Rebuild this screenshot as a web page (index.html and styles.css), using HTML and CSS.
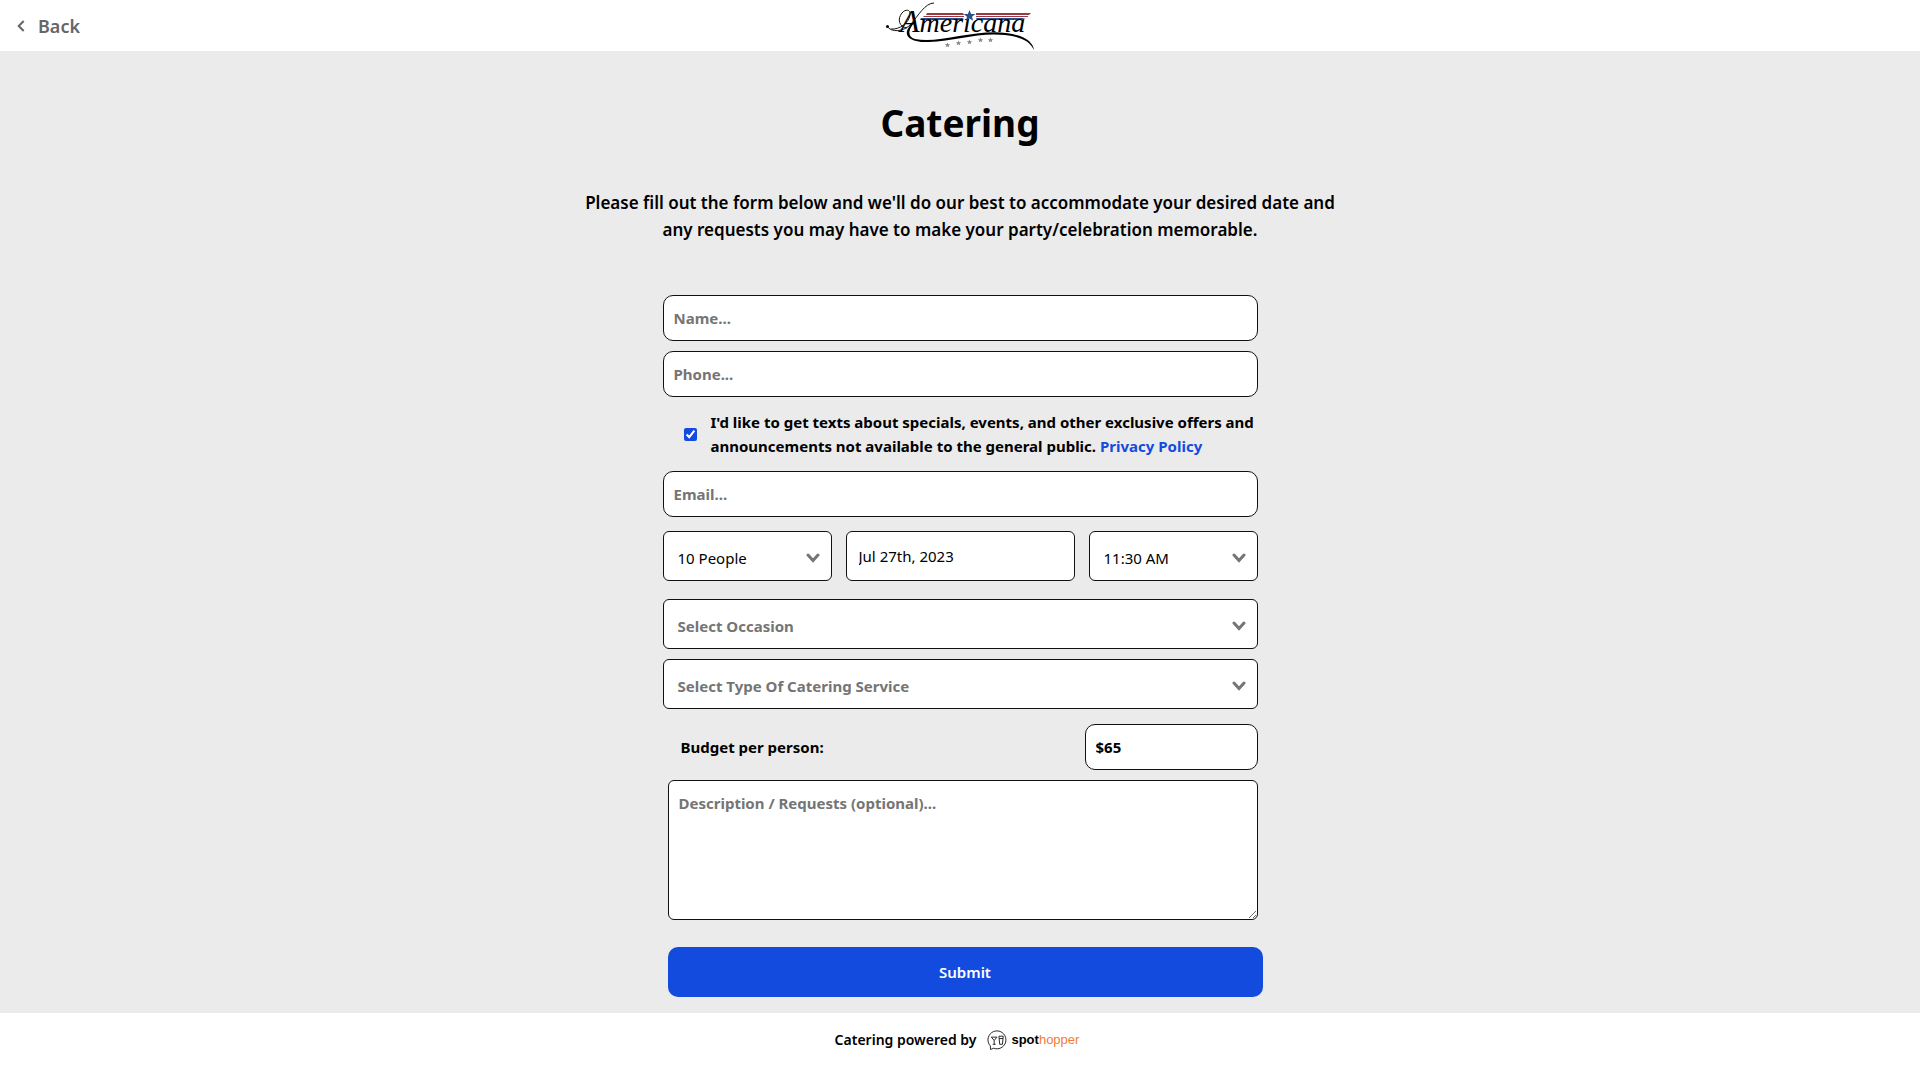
FILE: index.html
```html
<!DOCTYPE html>
<html lang="en">
<head>
<meta charset="utf-8">
<meta name="viewport" content="width=device-width, initial-scale=1">
<title>Americana – Catering</title>
<link rel="stylesheet" href="styles.css">
</head>
<body>
<header class="topbar">
  <a class="back" href="#">
    <svg class="back-icon" viewBox="0 0 8 12" aria-hidden="true"><path d="M6.7 1 1.7 6l5 5"/></svg>
    <span>Back</span>
  </a>
  <a class="brand" href="#" aria-label="Americana home">
    <svg class="brand-logo" viewBox="0 0 150 48">
      <g class="flag-red"><path d="M42 11h36l1 2H41zM91 11h55l-2 2H91z"/><path d="M39 14h40v1H38zM91 14h52v1H91z"/></g>
      <g class="flag-blue"><path d="M36 16h43l-3 2H35zM91 16h50l-7 2H92z"/></g>
      <text class="script" x="15" y="30"><tspan class="script-cap">A</tspan>mericana</text>
      <path class="flag-blue" d="m84.500 8 1.600 4 4.200.1-3.300 2.600 1.200 4-3.700-2.300-3.700 2.300 1.200-4-3.300-2.600 4.200-.1z"/>
      <circle cx="2.500" cy="24.500" r="1.500"/>
      <path class="hairline" d="M49 1C40 1 33 14 26 22C19 30 6 31 2 24M22 26C14 25 12 17 17 11C20 7 26 7 25 13C24 21 14 28 6 27"/>
      <path class="swash" d="M31 19C24 26 21 34 30 37C54 42 90 27 121 31C139 33 148 40 149 48C144 38 135 35 120 33C94 30 70 39 44 40C24 41 18 33 24 25C27 21 29 18 31 19z"/>
      <g class="stars">
        <path id="star" d="m62.500 40.500.8 1.700 1.900.1-1.400 1.200.4 1.800-1.700-1-1.700 1 .4-1.800-1.400-1.200 1.900-.1z"/>
        <use href="#star" x="11" y="-2"/><use href="#star" x="22" y="-3"/><use href="#star" x="33" y="-5"/><use href="#star" x="43" y="-5"/>
      </g>
    </svg>
  </a>
</header>

<main class="page">
  <h1 class="title">Catering</h1>
  <p class="intro">Please fill out the form below and we'll do our best to accommodate your desired date and any requests you may have to make your party/celebration memorable.</p>

  <form class="form">
    <input class="field" type="text" placeholder="Name..." aria-label="Name">
    <input class="field" type="tel" placeholder="Phone..." aria-label="Phone">
    <div class="consent">
      <input class="consent-box" id="consent" type="checkbox" checked>
      <div class="consent-text"><label for="consent">I'd like to get texts about specials, events, and other exclusive offers and announcements not available to the general public.</label> <a class="link" href="#">Privacy Policy</a></div>
    </div>
    <input class="field" type="email" placeholder="Email..." aria-label="Email">

    <div class="when">
      <div class="picker">
        <select class="select" aria-label="Party size"><option>10 People</option></select>
        <svg class="chevron" viewBox="0 0 14 10" aria-hidden="true"><path d="m2 2 5 5.500L12 2"/></svg>
      </div>
      <input class="date" type="text" value="Jul 27th, 2023" aria-label="Date">
      <div class="picker">
        <select class="select" aria-label="Time"><option>11:30 AM</option></select>
        <svg class="chevron" viewBox="0 0 14 10" aria-hidden="true"><path d="m2 2 5 5.500L12 2"/></svg>
      </div>
    </div>

    <div class="details">
      <div class="picker">
        <select class="select select-empty" aria-label="Occasion"><option>Select Occasion</option></select>
        <svg class="chevron" viewBox="0 0 14 10" aria-hidden="true"><path d="m2 2 5 5.500L12 2"/></svg>
      </div>
      <div class="picker">
        <select class="select select-empty" aria-label="Type of catering service"><option>Select Type Of Catering Service</option></select>
        <svg class="chevron" viewBox="0 0 14 10" aria-hidden="true"><path d="m2 2 5 5.500L12 2"/></svg>
      </div>
    </div>

    <div class="budget">
      <label for="budget">Budget per person:</label>
      <input class="field budget-field" id="budget" type="text" value="$65">
    </div>
    <textarea class="notes" placeholder="Description / Requests (optional)..." aria-label="Description or requests"></textarea>
    <button class="submit" type="submit">Submit</button>
  </form>
</main>

<footer class="footer">
  <span>Catering powered by</span>
  <a class="powered" href="#">
    <svg class="powered-icon" viewBox="0 0 22 22" aria-hidden="true">
      <path d="M3.500 17.200A9.400 9.400 0 1 1 7 19.600L3.700 21z"/>
      <path d="M4.500 8h6L7.500 11.500zM7.500 11.500v4M6 15.500h3M12.500 7h4.500l-.8 8.500h-2.900zM12.800 9.500h4"/>
    </svg>
    <span class="powered-name"><span class="powered-strong">spot</span>hopper</span>
  </a>
</footer>
</body>
</html>
```

FILE: styles.css
```css
* { box-sizing: border-box; }

body {
  margin: 0;
  min-height: 100vh;
  display: flex;
  flex-direction: column;
  background: #fff;
  color: #000;
  font: 700 15px/24px "Noto Sans", "Open Sans", sans-serif;
}

input, select, textarea, button { font: inherit; color: inherit; margin: 0; }
a { text-decoration: none; }

.topbar {
  display: grid;
  grid-template-columns: 1fr auto 1fr;
  align-items: center;
  height: 51px;
}
.back {
  display: flex;
  align-items: center;
  gap: 13px;
  padding-left: 17px;
  color: #666;
  font-size: 18px;
  font-weight: 600;
}
.back-icon { width: 8px; height: 12px; }
.back-icon path { fill: none; stroke: #666; stroke-width: 2; }
.brand { display: block; height: 48px; }
.brand-logo { display: block; width: 150px; height: 48px; overflow: visible; }
.flag-red { fill: #983b42; }
.flag-blue { fill: #28508a; }
.stars { fill: #888; }
.hairline { fill: none; stroke: #111; stroke-width: 1; }
.script { font: italic 400 28px "Liberation Serif", serif; fill: #000; }
.script-cap { font-size: 32px; }

.page { flex: 1; padding: 48px 16px 16px; background: #ebebeb; }
.title { margin: 0; text-align: center; font-size: 37px; line-height: 48px; }
.intro {
  max-width: 768px;
  margin: 42px auto 52px;
  text-align: center;
  font-size: 17px;
  line-height: 27px;
  font-weight: 600;
}

.form { display: flex; flex-direction: column; max-width: 595px; margin: 0 auto; }
.field {
  width: 100%;
  height: 46px;
  margin-bottom: 10px;
  padding: 0 10px;
  border: 1px solid #111;
  border-radius: 10px;
  background: #fff;
}
::placeholder { color: #757575; opacity: 1; }

.consent { display: flex; align-items: center; gap: 14px; padding: 3px 0 13px 21px; }
.consent-box { flex: none; width: 13px; height: 13px; accent-color: #124bde; }
.link { color: #124bde; }

.when { display: grid; grid-template-columns: 169fr 229fr 169fr; gap: 14px; margin: 4px 0 18px; }
.details { display: grid; gap: 10px; }
.picker { display: grid; align-items: center; }
.picker > * { grid-area: 1 / 1; }
.select, .date {
  width: 100%;
  height: 50px;
  border: 1px solid #111;
  border-radius: 6px;
  background: #fff;
}
.select { appearance: none; padding: 4px 32px 0 14px; font-weight: 400; }
.date { padding: 0 12px; font-weight: 400; }
.select-empty { color: #757575; font-weight: 700; }
.chevron { justify-self: end; width: 14px; height: 10px; margin: 4px 12px 0 0; pointer-events: none; }
.chevron path { fill: none; stroke: #757575; stroke-width: 3; stroke-linecap: round; }

.budget { display: flex; align-items: center; justify-content: space-between; margin: 15px 0 10px; padding-left: 18px; }
.budget-field { width: 173px; margin: 0; }
.notes {
  height: 140px;
  margin-left: 5px;
  padding: 10px;
  border: 1px solid #111;
  border-radius: 6px;
  background: #fff;
  resize: vertical;
}
.submit {
  height: 50px;
  margin: 27px -5px 0 5px;
  border: 0;
  border-radius: 10px;
  background: #124bde;
  color: #fff;
  font-weight: 600;
}

.footer {
  display: flex;
  justify-content: center;
  align-items: center;
  gap: 11px;
  height: 54px;
  padding-right: 6px;
  font-size: 14px;
  font-weight: 600;
}
.powered { display: flex; align-items: center; gap: 3px; color: #f47b37; }
.powered-icon { width: 21px; height: 22px; }
.powered-icon path { fill: none; stroke: #222; stroke-width: 1; }
.powered-name { font: 400 13px/20px "Liberation Sans", sans-serif; }
.powered-strong { font-weight: 700; color: #000; }
```
